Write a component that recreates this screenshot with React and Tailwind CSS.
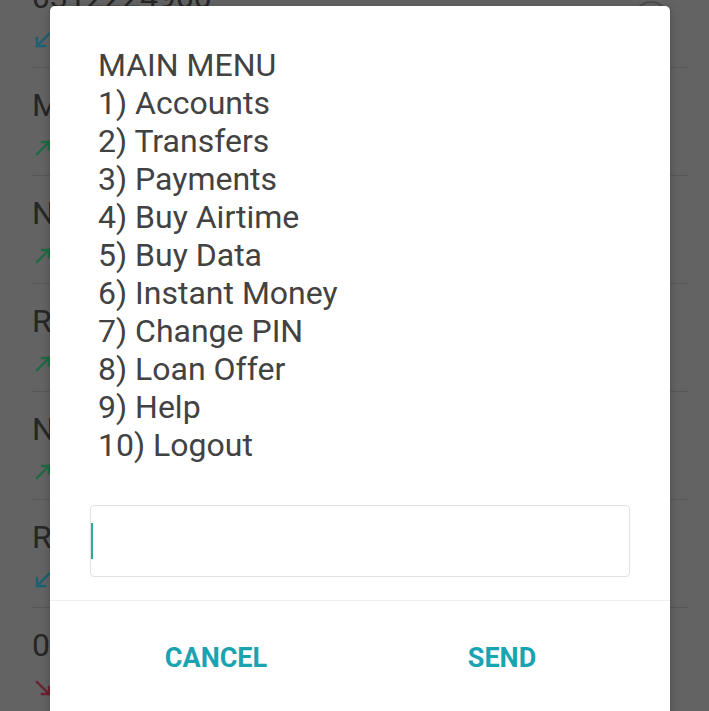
import React from "react";

const rows = [
  { name: "0312224900", arrow: "in" },
  { name: "M", arrow: "out" },
  { name: "N", arrow: "out" },
  { name: "R", arrow: "out" },
  { name: "N", arrow: "out" },
  { name: "R", arrow: "in" },
  { name: "0", arrow: "missed" },
];

function Arrow({ kind }) {
  if (kind === "in") {
    return (
      <svg width="18" height="18" viewBox="0 0 18 18" fill="none" stroke="#1d5f73" strokeWidth="2.4" strokeLinecap="square">
        <path d="M15 3 L3 15 M3 7 L3 15 L11 15" />
      </svg>
    );
  }
  if (kind === "missed") {
    return (
      <svg width="18" height="18" viewBox="0 0 18 18" fill="none" stroke="#6b2230" strokeWidth="2.4" strokeLinecap="square">
        <path d="M3 3 L15 15 M15 8 L15 15 L8 15" />
      </svg>
    );
  }
  return (
    <svg width="18" height="18" viewBox="0 0 18 18" fill="none" stroke="#1f6a42" strokeWidth="2.4" strokeLinecap="square">
      <path d="M3 15 L15 3 M8 3 L15 3 L15 10" />
    </svg>
  );
}

const menu = [
  "MAIN MENU",
  "1) Accounts",
  "2) Transfers",
  "3) Payments",
  "4) Buy Airtime",
  "5) Buy Data",
  "6) Instant Money",
  "7) Change PIN",
  "8) Loan Offer",
  "9) Help",
  "10) Logout",
];

export default function App() {
  return (
    <div
      className="relative w-[709px] h-[711px] overflow-hidden bg-[#636363]"
      style={{ fontFamily: "Roboto, 'Noto Sans', sans-serif" }}
    >
      {/* background call list (dimmed) */}
      <div className="flex flex-col -mt-[40px]">
        {rows.map((r, i) => (
          <div
            key={i}
            className="relative h-[108px] ml-[32px] mr-[21px] border-b border-[#575757] pt-[17px] shrink-0"
          >
            <div className="text-[32px] leading-[40px] text-[#262626]">{r.name}</div>
            <div className="mt-[14px] ml-[2px]">
              <Arrow kind={r.arrow} />
            </div>
            {i === 0 && (
              <svg
                className="absolute right-[18px] top-[40px]"
                width="38"
                height="38"
                viewBox="0 0 38 38"
                fill="none"
              >
                <circle cx="19" cy="19" r="17" stroke="#4d4d4d" strokeWidth="2" />
              </svg>
            )}
          </div>
        ))}
      </div>

      {/* dialog */}
      <div className="absolute left-[50px] top-[6px] w-[620px] h-[740px] bg-white rounded-[5px] shadow-[0_2px_8px_rgba(0,0,0,0.25)] flex flex-col">
        <div className="pt-[40px] pl-[48px] text-[32px] leading-[38px] text-[#424242]">
          {menu.map((m) => (
            <div key={m}>{m}</div>
          ))}
        </div>
        <div className="mx-[40px] mt-[41px] h-[72px] border border-[#e2e2e2] rounded-[4px] flex items-center">
          <div className="w-[2px] h-[36px] bg-[#2aae98]" />
        </div>
        <div className="mt-[23px] h-px bg-[#efefef]" />
        <div className="grid grid-cols-2 pl-[23px] pr-[25px] pt-[41px]">
          <div className="text-center text-[27px] leading-[32px] font-bold text-[#1aa3b0]">CANCEL</div>
          <div className="text-center text-[27px] leading-[32px] font-bold text-[#1aa3b0]">SEND</div>
        </div>
      </div>
    </div>
  );
}
